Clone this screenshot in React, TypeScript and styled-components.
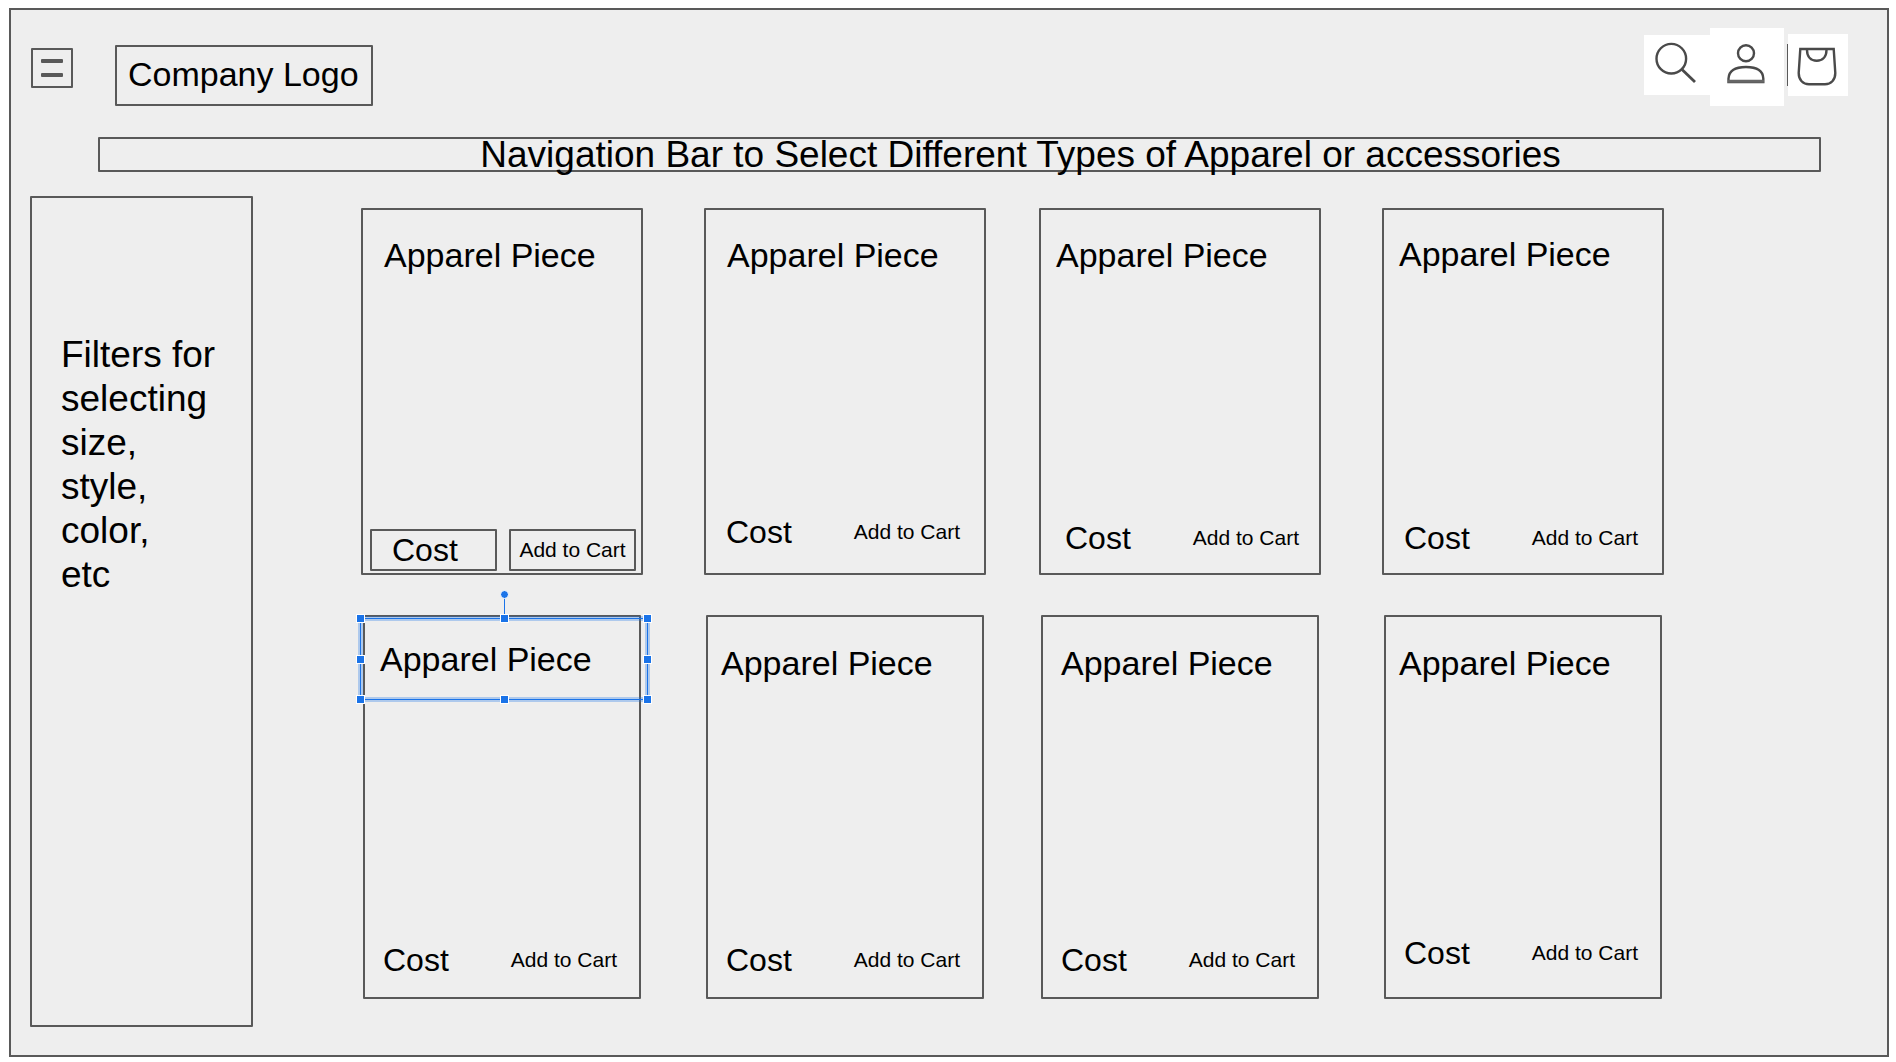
import React from "react";
import styled, { createGlobalStyle } from "styled-components";

const ink = "#595959";
const paper = "#eeeeee";
const accent = "#1a73e8";
const halo = "rgba(26, 115, 232, 0.3)";

const GlobalStyle = createGlobalStyle`
  *, *::before, *::after { box-sizing: border-box; }
  body {
    margin: 0;
    background: #ffffff;
    color: #000000;
    font-family: "Liberation Sans", Arial, sans-serif;
  }
  h1, h2, p { margin: 0; font-weight: 400; }
  button {
    margin: 0;
    padding: 0;
    border: 0;
    background: none;
    color: inherit;
    font: inherit;
    cursor: pointer;
  }
`;

const Frame = styled.div`
  display: flex;
  flex-direction: column;
  min-height: calc(100vh - 13px);
  margin: 8px 7px 5px 9px;
  border: 2px solid ${ink};
  background: ${paper};
`;

const Header = styled.header`
  display: flex;
  align-items: flex-start;
  justify-content: space-between;
  padding: 18px 39px 0 20px;
`;

const Brand = styled.div`
  display: flex;
  align-items: flex-start;
  gap: 42px;
  padding-top: 17px;
`;

const MenuButton = styled.button`
  display: flex;
  flex-direction: column;
  align-items: center;
  justify-content: center;
  gap: 10px;
  width: 42px;
  height: 40px;
  margin-top: 3px;
  border: 2px solid ${ink};
  border-radius: 1px;
`;

const MenuLine = styled.span`
  width: 22px;
  height: 4px;
  border-radius: 1px;
  background: ${ink};
`;

const Logo = styled.h1`
  padding: 7px 12px 10px 11px;
  border: 2px solid ${ink};
  border-radius: 1px;
  font-size: 34px;
  line-height: 40px;
  white-space: nowrap;
`;

const Actions = styled.div`
  display: flex;
  align-items: center;
  height: 74px;
`;

const IconButton = styled.button<{ $w: number; $h: number }>`
  flex: none;
  width: ${(p) => p.$w}px;
  height: ${(p) => p.$h}px;
  background: #ffffff;

  svg {
    display: block;
    fill: none;
    stroke: #4a4a4a;
    stroke-width: 2.4;
  }
`;

const AccountButton = styled(IconButton)`
  align-self: flex-start;
`;

const Divider = styled.span`
  width: 1px;
  height: 42px;
  margin-left: 3px;
  background: ${ink};
`;

const NavBar = styled.nav`
  margin: 31px 66px 0 87px;
  padding-left: 122px;
  border: 2px solid ${ink};
  border-radius: 1px;
  font-size: 37px;
  line-height: 31px;
  text-align: center;
  white-space: nowrap;
`;

const Content = styled.div`
  display: flex;
  flex: 1;
  gap: 108px;
  padding: 24px 223px 28px 19px;
`;

const Filters = styled.aside`
  flex: none;
  width: 223px;
  padding: 135px 29px;
  border: 2px solid ${ink};
  border-radius: 1px;
  font-size: 37px;
  line-height: 44px;
  white-space: pre-line;
`;

const Catalog = styled.main`
  display: flex;
  flex: 1;
  flex-direction: column;
  gap: 40px;
  padding: 12px 0 28px;
`;

const Row = styled.div<{ $inset: number; $height: number }>`
  display: flex;
  gap: ${(p) => 53 + p.$inset * 2}px;
  min-height: ${(p) => p.$height}px;
  padding: 0 ${(p) => p.$inset}px;
`;

const Pair = styled.div<{ $inset: number }>`
  display: flex;
  flex: 1;
  gap: ${(p) => 61 + p.$inset * 2}px;
`;

const CardBox = styled.article`
  position: relative;
  display: flex;
  flex: 1 1 0;
  flex-direction: column;
  justify-content: space-between;
  border: 2px solid ${ink};
  border-radius: 1px;
`;

const CardTitle = styled.h2<{ $x: number; $y: number }>`
  padding: ${(p) => p.$y}px 0 0 ${(p) => p.$x}px;
  font-size: 34px;
  line-height: 40px;
  white-space: nowrap;
`;

const CardFooter = styled.div<{ $x: number; $bottom: number }>`
  display: flex;
  align-items: center;
  gap: 62px;
  padding: 0 0 ${(p) => p.$bottom}px ${(p) => p.$x}px;
`;

const BoxedFooter = styled.div`
  display: grid;
  grid-template-columns: 1fr 1fr;
  gap: 12px;
  padding: 0 5px 2px 7px;
`;

const Cost = styled.p`
  font-size: 32px;
  line-height: 36px;
`;

const AddButton = styled.button`
  font-size: 21px;
  line-height: 24px;
  white-space: nowrap;
`;

const BoxedCost = styled(Cost)`
  height: 42px;
  padding: 1px 20px;
  border: 2px solid ${ink};
  border-radius: 1px;
`;

const BoxedAddButton = styled(AddButton)`
  height: 42px;
  border: 2px solid ${ink};
  border-radius: 1px;
`;

const Selection = styled.div`
  position: absolute;
  top: 1px;
  right: -9px;
  left: -5px;
  height: 82px;
  border: 1px solid ${accent};
  box-shadow: 0 0 0 2px ${halo}, inset 0 0 0 2px ${halo};
  pointer-events: none;
`;

const Handles = styled.div`
  position: absolute;
  inset: -5px;
  display: grid;
  grid-template-columns: repeat(3, 9px);
  grid-template-rows: repeat(3, 9px);
  justify-content: space-between;
  align-content: space-between;
`;

const Handle = styled.span<{ $col: number; $row: number }>`
  grid-column: ${(p) => p.$col};
  grid-row: ${(p) => p.$row};
  border: 1px solid #ffffff;
  background: ${accent};
`;

const Stem = styled.span`
  position: absolute;
  bottom: 100%;
  left: 50%;
  width: 1px;
  height: 22px;
  background: ${accent};
`;

const Knob = styled.span`
  position: absolute;
  bottom: 100%;
  left: calc(50% - 4px);
  width: 9px;
  height: 9px;
  margin-bottom: 20px;
  border: 1px solid #ffffff;
  border-radius: 50%;
  background: ${accent};
`;

type Card = {
  titleX: number;
  titleY: number;
  footX: number;
  footBottom: number;
  boxed?: boolean;
  selected?: boolean;
};

type CatalogRow = { inset: number; height: number; cards: Card[] };

const rows: CatalogRow[] = [
  {
    inset: 0,
    height: 367,
    cards: [
      { titleX: 21, titleY: 25, footX: 0, footBottom: 0, boxed: true },
      { titleX: 21, titleY: 25, footX: 20, footBottom: 23 },
      { titleX: 15, titleY: 25, footX: 24, footBottom: 17 },
      { titleX: 15, titleY: 24, footX: 20, footBottom: 17 },
    ],
  },
  {
    inset: 2,
    height: 384,
    cards: [
      { titleX: 15, titleY: 22, footX: 18, footBottom: 19, selected: true },
      { titleX: 13, titleY: 26, footX: 18, footBottom: 19 },
      { titleX: 18, titleY: 26, footX: 18, footBottom: 19 },
      { titleX: 13, titleY: 26, footX: 18, footBottom: 26 },
    ],
  },
];

const handles = [
  [1, 1], [2, 1], [3, 1],
  [1, 2], [3, 2],
  [1, 3], [2, 3], [3, 3],
];

function ApparelCard({ card }: { card: Card }) {
  return (
    <CardBox>
      <CardTitle $x={card.titleX} $y={card.titleY}>Apparel Piece</CardTitle>
      {card.boxed ? (
        <BoxedFooter>
          <BoxedCost>Cost</BoxedCost>
          <BoxedAddButton type="button">Add to Cart</BoxedAddButton>
        </BoxedFooter>
      ) : (
        <CardFooter $x={card.footX} $bottom={card.footBottom}>
          <Cost>Cost</Cost>
          <AddButton type="button">Add to Cart</AddButton>
        </CardFooter>
      )}
      {card.selected && (
        <Selection>
          <Stem />
          <Knob />
          <Handles>
            {handles.map(([col, row]) => (
              <Handle key={`${col}-${row}`} $col={col} $row={row} />
            ))}
          </Handles>
        </Selection>
      )}
    </CardBox>
  );
}

export default function App() {
  return (
    <>
      <GlobalStyle />
      <Frame>
        <Header>
          <Brand>
            <MenuButton type="button" aria-label="Menu">
              <MenuLine />
              <MenuLine />
            </MenuButton>
            <Logo>Company Logo</Logo>
          </Brand>
          <Actions>
            <IconButton type="button" aria-label="Search" $w={66} $h={60}>
              <svg width="66" height="60" viewBox="0 0 66 60">
                <circle cx="27.3" cy="23.7" r="14.8" />
                <path d="M38 34.5 L51 47" strokeWidth="2.8" />
              </svg>
            </IconButton>
            <AccountButton type="button" aria-label="Account" $w={74} $h={78}>
              <svg width="74" height="78" viewBox="0 0 74 78">
                <circle cx="36" cy="25.3" r="8" />
                <path d="M18.5 54 V50.5 C19 42 25 39 36 39 S53 42 53.3 50.5 V54 Z" />
                <path d="M18 53.3 H54" strokeWidth="3" stroke="#666666" />
              </svg>
            </AccountButton>
            <Divider />
            <IconButton type="button" aria-label="Shopping bag" $w={60} $h={62}>
              <svg width="60" height="62" viewBox="0 0 60 62">
                <path d="M12.3 15 H45.7 L47.3 39 C47.3 46 43 50.3 37 50.3 H21 C15 50.3 10.7 46 10.7 39 Z" />
                <path d="M19 16 C19 23 23 26.8 28.7 26.8 S38.5 23 38.5 16" />
              </svg>
            </IconButton>
          </Actions>
        </Header>
        <NavBar>Navigation Bar to Select Different Types of Apparel or accessories</NavBar>
        <Content>
          <Filters>{"Filters for\nselecting\nsize,\nstyle,\ncolor,\netc"}</Filters>
          <Catalog>
            {rows.map((row, r) => (
              <Row key={r} $inset={row.inset} $height={row.height}>
                {[0, 2].map((start) => (
                  <Pair key={start} $inset={row.inset}>
                    {row.cards.slice(start, start + 2).map((card, c) => (
                      <ApparelCard key={c} card={card} />
                    ))}
                  </Pair>
                ))}
              </Row>
            ))}
          </Catalog>
        </Content>
      </Frame>
    </>
  );
}
